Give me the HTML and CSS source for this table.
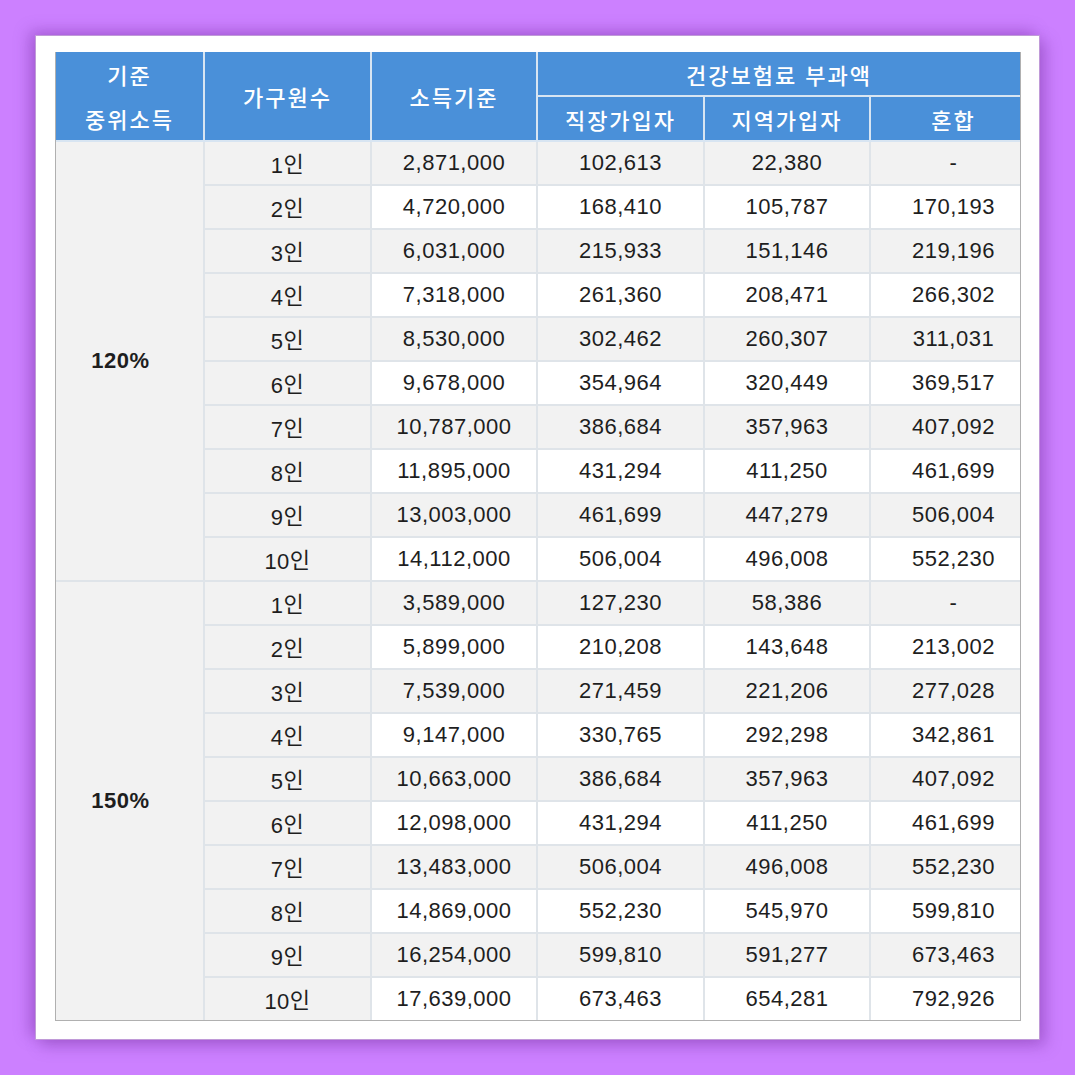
FILE: index.html
```html
<!DOCTYPE html>
<html lang="ko">
<head>
<meta charset="utf-8">
<title>건강보험료 부과액</title>
<link rel="stylesheet" href="styles.css">
</head>
<body>
<div class="card">
<table class="tbl">
<colgroup>
<col class="c1"><col class="c2"><col class="c3"><col class="c4"><col class="c5"><col class="c6">
</colgroup>
<thead>
<tr>
<th rowspan="2" class="two">기준<br>중위소득</th>
<th rowspan="2">가구원수</th>
<th rowspan="2">소득기준</th>
<th colspan="3" class="last">건강보험료 부과액</th>
</tr>
<tr>
<th>직장가입자</th>
<th>지역가입자</th>
<th class="last mix">혼합</th>
</tr>
</thead>
<tbody>
<tr class="g"><td rowspan="10" class="pct">120%</td><td class="n">1<span class="k">인</span></td><td>2,871,000</td><td>102,613</td><td>22,380</td><td class="last mix">-</td></tr>
<tr><td class="n">2<span class="k">인</span></td><td>4,720,000</td><td>168,410</td><td>105,787</td><td class="last mix">170,193</td></tr>
<tr class="g"><td class="n">3<span class="k">인</span></td><td>6,031,000</td><td>215,933</td><td>151,146</td><td class="last mix">219,196</td></tr>
<tr><td class="n">4<span class="k">인</span></td><td>7,318,000</td><td>261,360</td><td>208,471</td><td class="last mix">266,302</td></tr>
<tr class="g"><td class="n">5<span class="k">인</span></td><td>8,530,000</td><td>302,462</td><td>260,307</td><td class="last mix">311,031</td></tr>
<tr><td class="n">6<span class="k">인</span></td><td>9,678,000</td><td>354,964</td><td>320,449</td><td class="last mix">369,517</td></tr>
<tr class="g"><td class="n">7<span class="k">인</span></td><td>10,787,000</td><td>386,684</td><td>357,963</td><td class="last mix">407,092</td></tr>
<tr><td class="n">8<span class="k">인</span></td><td>11,895,000</td><td>431,294</td><td>411,250</td><td class="last mix">461,699</td></tr>
<tr class="g"><td class="n">9<span class="k">인</span></td><td>13,003,000</td><td>461,699</td><td>447,279</td><td class="last mix">506,004</td></tr>
<tr><td class="n">10<span class="k">인</span></td><td>14,112,000</td><td>506,004</td><td>496,008</td><td class="last mix">552,230</td></tr>
<tr class="g"><td rowspan="10" class="pct">150%</td><td class="n">1<span class="k">인</span></td><td>3,589,000</td><td>127,230</td><td>58,386</td><td class="last mix">-</td></tr>
<tr><td class="n">2<span class="k">인</span></td><td>5,899,000</td><td>210,208</td><td>143,648</td><td class="last mix">213,002</td></tr>
<tr class="g"><td class="n">3<span class="k">인</span></td><td>7,539,000</td><td>271,459</td><td>221,206</td><td class="last mix">277,028</td></tr>
<tr><td class="n">4<span class="k">인</span></td><td>9,147,000</td><td>330,765</td><td>292,298</td><td class="last mix">342,861</td></tr>
<tr class="g"><td class="n">5<span class="k">인</span></td><td>10,663,000</td><td>386,684</td><td>357,963</td><td class="last mix">407,092</td></tr>
<tr><td class="n">6<span class="k">인</span></td><td>12,098,000</td><td>431,294</td><td>411,250</td><td class="last mix">461,699</td></tr>
<tr class="g"><td class="n">7<span class="k">인</span></td><td>13,483,000</td><td>506,004</td><td>496,008</td><td class="last mix">552,230</td></tr>
<tr><td class="n">8<span class="k">인</span></td><td>14,869,000</td><td>552,230</td><td>545,970</td><td class="last mix">599,810</td></tr>
<tr class="g"><td class="n">9<span class="k">인</span></td><td>16,254,000</td><td>599,810</td><td>591,277</td><td class="last mix">673,463</td></tr>
<tr class="end"><td class="n">10<span class="k">인</span></td><td>17,639,000</td><td>673,463</td><td>654,281</td><td class="last mix">792,926</td></tr>
</tbody>
</table>
</div>
</body>
</html>
```

FILE: styles.css
```css
html, body {
  margin: 0;
  padding: 0;
}
body {
  background: #cc80ff;
  width: 1075px;
  height: 1075px;
  padding: 35px 0 0 35px;
  box-sizing: border-box;
  font-family: "Liberation Sans", "Noto Sans CJK KR", sans-serif;
}
.card {
  width: 1005px;
  height: 1005px;
  box-sizing: border-box;
  background: #fff;
  border: 1px solid #c09ad8;
  padding: 16px 19px 0 19px;
  box-shadow: -6px -4px 14px rgba(110, 40, 150, 0.35), 6px 6px 14px rgba(110, 40, 150, 0.35);
}
.tbl {
  border-collapse: separate;
  border-spacing: 0;
  table-layout: fixed;
  width: 966px;
  border-left: 1px solid #b0b0b0;
  border-right: 1px solid #b0b0b0;
  border-bottom: 1px solid #b0b0b0;
}
.c1 { width: 149px; }
.c2 { width: 167px; }
.c3 { width: 166px; }
.c4 { width: 167px; }
.c5 { width: 166px; }
.c6 { width: 149px; }
th {
  background: #4a90d9;
  color: #fff;
  font-family: "Noto Sans CJK KR", "Liberation Sans", sans-serif;
  font-weight: 500;
  font-size: 22px;
  letter-spacing: 2px;
  height: 41px;
  padding: 0;
  text-align: center;
  vertical-align: middle;
  border-right: 2px solid #d8e5f2;
  border-bottom: 2px solid #d8e5f2;
}
th.two {
  line-height: 44px;
}
th.last, td.last {
  border-right: none;
}
td {
  height: 42px;
  padding: 0;
  text-align: center;
  vertical-align: middle;
  font-size: 22px;
  letter-spacing: 0.5px;
  color: #1e1e1e;
  background: #fff;
  border-right: 2px solid #dfe4e9;
  border-bottom: 2px solid #dfe4e9;
}
.k {
  font-family: "Noto Sans CJK KR", sans-serif;
  position: relative;
  top: -1px;
}
tr.g td {
  background: #f2f2f2;
}
td.n, td.pct {
  background: #f2f2f2;
}
td.pct {
  font-weight: bold;
  padding-right: 18px;
}
.mix {
  padding-left: 16px;
}
tr.end td {
  border-bottom: none;
}
tbody tr:nth-child(11) td.pct {
  border-bottom: none;
}
```
